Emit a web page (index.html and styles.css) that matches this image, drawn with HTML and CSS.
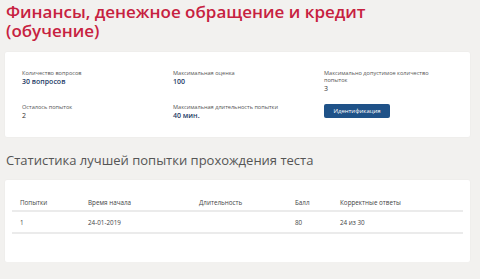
FILE: index.html
```html
<!DOCTYPE html>
<html lang="ru">
  <head>
    <meta charset="UTF-8" />
    <meta name="viewport" content="width=device-width, initial-scale=1.0" />
    <title>Финансы, денежное обращение и кредит</title>
    <link rel="stylesheet" href="styles.css">
  </head>
  <body>
    <h1 class="page-title">Финансы, денежное обращение и кредит (обучение)</h1>

    <div class="card info-card">
      <div class="info-item">
        <div class="info-label">Количество вопросов</div>
        <div class="info-value">30 вопросов</div>
      </div>
      <div class="info-item">
        <div class="info-label">Максимальная оценка</div>
        <div class="info-value">100</div>
      </div>
      <div class="info-item">
        <div class="info-label">Максимально допустимое количество<br />попыток</div>
        <div class="info-value plain">3</div>
      </div>
      <div class="info-item">
        <div class="info-label">Осталось попыток</div>
        <div class="info-value plain">2</div>
      </div>
      <div class="info-item">
        <div class="info-label">Максимальная длительность попытки</div>
        <div class="info-value">40 мин.</div>
      </div>
      <div class="info-item">
        <button class="btn-ident">Идентификация</button>
      </div>
    </div>

    <h2 class="section-title">Статистика лучшей попытки прохождения теста</h2>

    <div class="card table-card">
      <table class="stats">
        <thead>
          <tr>
            <th class="c1">Попытки</th>
            <th class="c2">Время начала</th>
            <th class="c3">Длительность</th>
            <th class="c4">Балл</th>
            <th>Корректные ответы</th>
          </tr>
        </thead>
        <tbody>
          <tr>
            <td>1</td>
            <td>24-01-2019</td>
            <td></td>
            <td>80</td>
            <td>24 из 30</td>
          </tr>
        </tbody>
      </table>
    </div>
  </body>
</html>
```

FILE: styles.css
```css
body {
  margin: 0;
  padding: 0 10px 0 5px;
  font-family: "Open Sans", "Noto Sans", sans-serif;
  background-color: #f2f1ef;
  color: #333;
}
.page-title {
  max-width: 380px;
  margin: 0 0 0 1px;
  padding-top: 2px;
  font-size: 17px;
  line-height: 19px;
  font-weight: 600;
  color: #c72140;
}
.card {
  background: #fff;
  border-radius: 2px;
  box-shadow: 0 0 2px rgba(0, 0, 0, 0.05);
}
.info-card {
  margin-top: 12px;
  display: grid;
  grid-template-columns: 151px 151px 1fr;
  row-gap: 11px;
  padding: 18px 17px 18px 17px;
  height: 49px;
}
.info-label {
  font-size: 5.6px;
  line-height: 7px;
  color: #555;
}
.info-value {
  font-size: 7px;
  line-height: 9px;
  font-weight: 600;
  color: #1e3b66;
}
.info-value.plain {
  font-weight: 400;
  color: #333;
}
.btn-ident {
  display: block;
  width: 66px;
  height: 14px;
  padding: 0;
  border: none;
  border-radius: 2px;
  background: #1f5288;
  color: #fff;
  font-family: "Open Sans", sans-serif;
  font-size: 6px;
}
.section-title {
  margin: 14px 0 0 1px;
  font-size: 13px;
  line-height: 18px;
  font-weight: 400;
  color: #555;
}
.table-card {
  margin-top: 11px;
  padding: 14px 7px 28px 7px;
}
.stats {
  width: 100%;
  border-collapse: collapse;
  font-size: 6.3px;
  color: #444;
}
.stats th,
.stats td {
  text-align: left;
  padding: 0 0 0 8px;
}
.stats th {
  font-weight: 400;
  height: 16px;
  border-bottom: 2px solid #ebebeb;
}
.stats td {
  height: 20px;
  border-bottom: 2px solid #ebebeb;
}
.c1 {
  width: 60px;
}
.c2 {
  width: 103px;
}
.c3 {
  width: 88px;
}
.c4 {
  width: 37px;
}
```
